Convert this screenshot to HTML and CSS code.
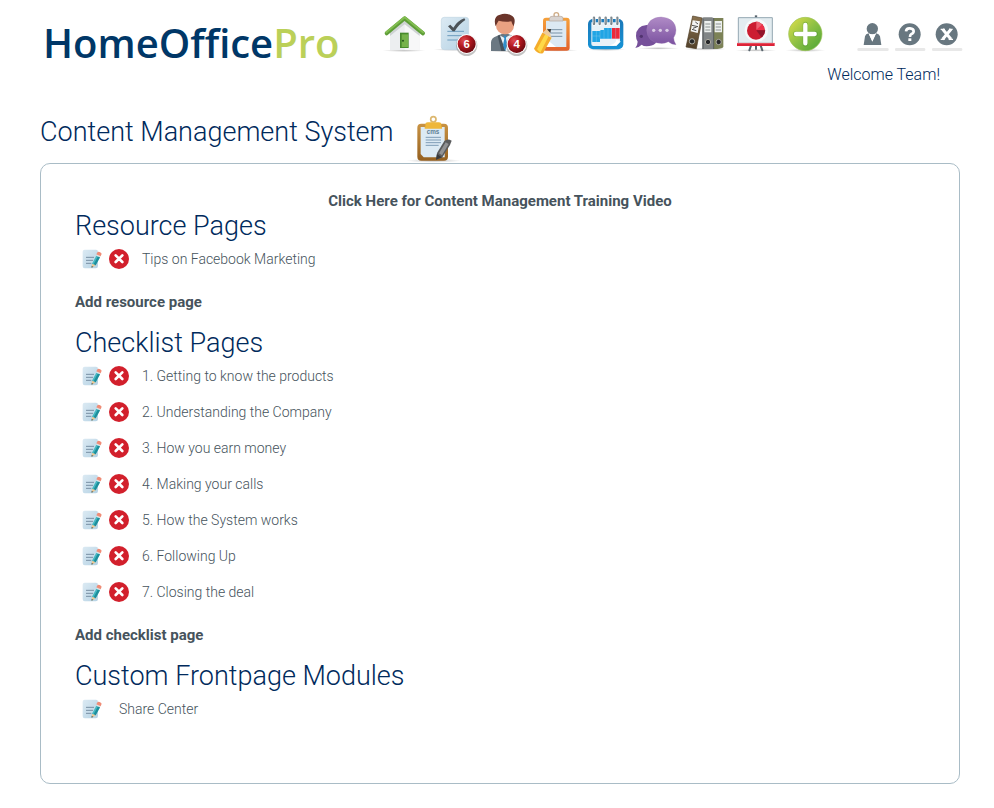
FILE: index.html
```
<!DOCTYPE html>
<html lang="en">
<head>
    <meta charset="utf-8">
    <title>HomeOfficePro - Content Management System</title>
    <link rel="stylesheet" href="styles.css">
</head>
<body>
    <!-- shared shapes for the page rows -->
    <svg class="defs" width="0" height="0" aria-hidden="true">
        <defs>
            <linearGradient id="paper" x2="1" y2="1"><stop stop-color="#dceaf3"/><stop offset="1" stop-color="#b5d2e4"/></linearGradient>
            <linearGradient id="orange" x2="0" y2="1"><stop stop-color="#f6a13a"/><stop offset="1" stop-color="#e2622c"/></linearGradient>
            <linearGradient id="blue" x2="0" y2="1"><stop stop-color="#1b78b8"/><stop offset="1" stop-color="#1593d6"/></linearGradient>
            <linearGradient id="purple" x2="0" y2="1"><stop stop-color="#b08bc6"/><stop offset="1" stop-color="#7b52a0"/></linearGradient>
            <linearGradient id="plus" x2="1" y2="1"><stop stop-color="#e3e04a"/><stop offset=".5" stop-color="#8cc044"/><stop offset="1" stop-color="#4aa336"/></linearGradient>
            <linearGradient id="brown" x2="0" y2="1"><stop stop-color="#8b7350"/><stop offset="1" stop-color="#51402a"/></linearGradient>
            <linearGradient id="gold" x2="0" y2="1"><stop stop-color="#c99343"/><stop offset="1" stop-color="#956020"/></linearGradient>
            <radialGradient id="badge" cx=".35" cy=".3" r=".8"><stop stop-color="#e04a50"/><stop offset=".45" stop-color="#b01820"/><stop offset="1" stop-color="#5e060c"/></radialGradient>
            <radialGradient id="shade"><stop stop-color="#999" stop-opacity=".6"/><stop offset="1" stop-color="#999" stop-opacity="0"/></radialGradient>
            <symbol id="edit" viewBox="0 0 60 60">
                <path d="M8 2H42Q48 2 48 8V51Q48 58 41 58H8Q2 58 2 51V8Q2 2 8 2Z" fill="url(#paper)"/>
                <path d="M12 25H36M12 34H33M12 43H28" stroke="#7890a4" stroke-width="3"/>
                <path d="M29 56L30 44L43 20L54 25L41 49Z" fill="#45b9c2"/>
                <path d="M35 46L48 22L54 25L41 49Z" fill="#1d8e9b"/>
                <path d="M29 56L30 44L41 49Z" fill="#f0c896"/>
                <path d="M29 56L29 51L33 53Z" fill="#333"/>
                <path d="M43 20L45 16L56 21L54 25Z" fill="#dce3e6"/>
                <path d="M43 16L47 9Q54 7 59 14L56 22Z" fill="#ef8c77"/>
            </symbol>
            <symbol id="delete" viewBox="0 0 60 60">
                <circle cx="30" cy="30" r="30" fill="#d2202c"/>
                <path d="M20 19L40 39M40 19L20 39" stroke="#fff" stroke-width="8" stroke-linecap="round"/>
            </symbol>
        </defs>
    </svg>

    <header class="header">
        <a class="logo" href="#">HomeOffice<span class="logo-pro">Pro</span></a>

        <div class="header-right">
            <nav class="toolbar">
                <a href="#" aria-label="Home">
                    <svg class="tool-icon" viewBox="0 0 150 180">
                        <ellipse cx="72" cy="137" rx="65" ry="4" fill="url(#shade)"/>
                        <path d="M30 82L74 46L119 82V135H30Z" fill="#eceef0"/>
                        <path d="M74 46L119 82V135H74Z" fill="#f7f7f8"/>
                        <path d="M30 80L74 46L119 80V93L74 58L30 93Z" fill="#cfd3d4"/>
                        <path d="M20 85L74 40L129 85" fill="none" stroke="#5e9d38" stroke-width="12" stroke-linecap="round" stroke-linejoin="round"/>
                        <path d="M19 82L74 37L129 82" fill="none" stroke="#82bd51" stroke-width="6" stroke-linecap="round" stroke-linejoin="round"/>
                        <path d="M60 83H86V129H60Z" fill="#478a2c"/>
                        <path d="M65 88H84V126H65Z" fill="#75b24a"/>
                        <circle cx="69" cy="107" r="3" fill="#24541c"/>
                    </svg>
                </a>
                <a href="#" aria-label="Tasks, 6 new">
                    <svg class="tool-icon" viewBox="150 0 150 180">
                        <ellipse cx="220" cy="134" rx="60" ry="4" fill="url(#shade)"/>
                        <rect x="184" y="37" width="82" height="97" rx="9" fill="url(#paper)" stroke="#bfd5e2" stroke-width="2"/>
                        <path d="M202 79H252M202 92H248M202 105H235" stroke="#6d9cbd" stroke-width="3"/>
                        <path d="M204 64L211 59L220 68Q232 48 253 40L256 45Q236 58 224 79H218Z" fill="#4c5358"/>
                        <circle cx="260" cy="121" r="32" fill="#888" opacity=".5"/>
                        <circle cx="260" cy="117" r="30" fill="#fff"/>
                        <circle cx="260" cy="117" r="27" fill="url(#badge)"/>
                        <text class="badge-text" x="260" y="128">6</text>
                    </svg>
                </a>
                <a href="#" aria-label="Contacts, 4 new">
                    <svg class="tool-icon" viewBox="300 0 150 180">
                        <ellipse cx="375" cy="138" rx="52" ry="4" fill="url(#shade)"/>
                        <path d="M333 138V112Q334 99 349 94L365 87H385L411 98V138Z" fill="#6b7882"/>
                        <path d="M357 90L374 99L392 89V138H374Z" fill="#e9f2f8"/>
                        <path d="M353 92L359 89L377 138H364Z" fill="#47535d"/>
                        <path d="M371 92L379 92L378 101L382 121L375 138L369 120L373 101Z" fill="#2f8dc9"/>
                        <ellipse cx="375" cy="62" rx="27" ry="26" fill="#e9a182"/>
                        <path d="M347 64Q338 34 360 29Q376 22 393 31Q410 38 401 64Q397 59 394 49Q374 52 356 47Q351 54 347 64Z" fill="#6b352b"/>
                        <circle cx="410" cy="121" r="32" fill="#888" opacity=".5"/>
                        <circle cx="410" cy="117" r="30" fill="#fff"/>
                        <circle cx="410" cy="117" r="27" fill="url(#badge)"/>
                        <text class="badge-text" x="410" y="128">4</text>
                    </svg>
                </a>
                <a href="#" aria-label="Notes">
                    <svg class="tool-icon" viewBox="0 0 150 180">
                        <ellipse cx="82" cy="136" rx="62" ry="4" fill="url(#shade)"/>
                        <rect x="39" y="38" width="80" height="99" rx="9" fill="url(#orange)"/>
                        <path d="M48 47H109V126H66L48 114Z" fill="#dce9f3"/>
                        <path d="M55 107L78 126H48V110Z" fill="#fff"/>
                        <circle cx="79" cy="30" r="7" fill="none" stroke="#cfac86" stroke-width="4"/>
                        <path d="M60 38Q60 34 66 34H92Q99 34 99 40V48H58V41Z" fill="#d8d3d0" stroke="#b3a598" stroke-width="2"/>
                        <path d="M61 74H97M61 84H97M61 94H97" stroke="#7891a5" stroke-width="3"/>
                        <path d="M12 131L37 83L65 98L39 145Q22 148 12 131Z" fill="#f5ad2b"/>
                        <path d="M21 133L46 87L56 93L31 143Z" fill="#ffd948"/>
                        <path d="M37 83L54 69L65 98Z" fill="#eecb9b"/>
                        <path d="M51 73L63 72L61 84Z" fill="#36302b"/>
                    </svg>
                </a>
                <a href="#" aria-label="Calendar">
                    <svg class="tool-icon" viewBox="150 0 150 180">
                        <ellipse cx="228" cy="134" rx="60" ry="4" fill="url(#shade)"/>
                        <rect x="174" y="42" width="106" height="91" rx="15" fill="url(#blue)"/>
                        <path d="M184 52H270V108L252 123H190Q184 123 184 117Z" fill="#e7f1f8"/>
                        <path d="M238 121Q256 119 260 103Q267 110 273 109L259 123Z" fill="#fff"/>
                        <path d="M187 78H211V75H222V69H245V101H210V111H187Z" fill="#20a5e5"/>
                        <path d="M246 69H269V101H246Z" fill="#ed2939"/>
                        <path d="M199 78V111M210 76V101M222 70V101M234 69V101M257 69V101M187 93H210" stroke="#9fd6ef" stroke-width="1"/>
                        <path d="M192 38V58M209 38V58M227 38V58M244 38V58M262 38V58" stroke="#fff" stroke-width="10" stroke-linecap="round"/>
                        <path d="M192 38V57M209 38V57M227 38V57M244 38V57M262 38V57" stroke="#78848b" stroke-width="7" stroke-linecap="round"/>
                        <path d="M190 38V55M207 38V55M225 38V55M242 38V55M260 38V55" stroke="#c1c9cd" stroke-width="2"/>
                    </svg>
                </a>
                <a href="#" aria-label="Messages">
                    <svg class="tool-icon" viewBox="300 0 150 180">
                        <ellipse cx="385" cy="130" rx="62" ry="4" fill="url(#shade)"/>
                        <path d="M318 93Q318 63 350 60Q385 62 385 93Q384 123 350 124Q340 124 335 119Q327 127 316 129Q323 119 323 110Q318 103 318 93Z" fill="#76509a"/>
                        <circle cx="334" cy="94" r="5" fill="#51336f"/>
                        <path d="M350 75Q352 38 393 36Q436 39 438 75Q438 88 431 98Q431 109 438 119Q425 119 415 110Q405 116 391 115Q352 112 350 75Z" fill="url(#purple)" stroke="#9b79b4"/>
                        <circle cx="371" cy="76" r="5" fill="#dacbe4"/>
                        <circle cx="391" cy="76" r="5" fill="#dacbe4"/>
                        <circle cx="411" cy="76" r="5" fill="#dacbe4"/>
                    </svg>
                </a>
                <a href="#" aria-label="Library">
                    <svg class="tool-icon" viewBox="0 0 150 180">
                        <ellipse cx="75" cy="132" rx="65" ry="5" fill="url(#shade)"/>
                        <path d="M38 33L67 39L49 131L18 126Z" fill="url(#brown)" stroke="#4d3c26" stroke-width="2"/>
                        <path d="M38 46L60 49L53 84L32 79Z" fill="#f4f4f4"/>
                        <path d="M36 61L54 65M39 70L50 66M36 73L49 77M46 51L54 57" stroke="#515151" stroke-width="3"/>
                        <path d="M67 40Q67 37 72 37H95Q101 37 101 42V132H67Z" fill="#818586"/>
                        <path d="M101 39H130V126Q126 132 101 132Z" fill="#7c8257"/>
                        <path d="M101 39V132M69 41V132" stroke="#55595a" stroke-width="3"/>
                        <path d="M73 48H94V82H73Z M104 48H126V82H104Z" fill="#edf0ee"/>
                        <path d="M76 57H91M76 66H91M76 75H91M107 57H123M107 66H123M107 75H123" stroke="#8c9392" stroke-width="3"/>
                        <g fill="#27282a" stroke="#aaa89f" stroke-width="3"><circle cx="36" cy="109" r="8"/><circle cx="84" cy="111" r="8"/><circle cx="116" cy="111" r="8"/></g>
                    </svg>
                </a>
                <a href="#" aria-label="Presentation">
                    <svg class="tool-icon" viewBox="150 0 150 180">
                        <ellipse cx="228" cy="136" rx="62" ry="4" fill="url(#shade)"/>
                        <path d="M217 110L208 136M238 110L247 136M228 110V132" stroke="#59656e" stroke-width="6" stroke-linecap="round"/>
                        <path d="M228 31V42" stroke="#59656e" stroke-width="7"/>
                        <path d="M175 38H277V115H175Z" fill="#e3ecf0" stroke="#95a8b2" stroke-width="3"/>
                        <circle cx="229" cy="76" r="35" fill="#fff" opacity=".65"/>
                        <circle cx="228" cy="77" r="27" fill="#cc1d31"/>
                        <path d="M229 74V49Q247 52 253 74Z" fill="#ed6070"/>
                        <path d="M229 74L247 58L254 75Z" fill="#ee3049"/>
                        <path d="M229 76H256Q254 90 244 97Z" fill="#91152b"/>
                        <path d="M171 114H284V123H171Z" fill="#dc2338"/>
                        <path d="M171 115H284" stroke="#f36c77" stroke-width="2"/>
                    </svg>
                </a>
                <a href="#" aria-label="Add">
                    <svg class="tool-icon" viewBox="300 0 150 180">
                        <ellipse cx="376" cy="136" rx="60" ry="5" fill="url(#shade)"/>
                        <circle cx="376" cy="87" r="50" fill="url(#plus)" stroke="#9bc354" stroke-width="2"/>
                        <path d="M376 58V117M347 87H406" stroke="#448c30" stroke-opacity=".35" stroke-width="16" stroke-linecap="round"/>
                        <path d="M376 60V115M348 87H404" stroke="#fff" stroke-width="13" stroke-linecap="round"/>
                    </svg>
                </a>
            </nav>

            <nav class="account-links">
                <a href="#" aria-label="Profile">
                    <svg class="account-icon" viewBox="102 0 111 180">
                        <rect x="112" y="129" width="94" height="9" rx="4" fill="#e8e8e8"/>
                        <circle cx="157" cy="71" r="17" fill="#687780"/>
                        <path d="M131 120L135 94Q137 86 146 85L157 110L168 85Q177 86 180 94L184 120Z" fill="#687780"/>
                        <path d="M146 86L157 109L168 86Q157 92 146 86Z" fill="#fff"/>
                    </svg>
                </a>
                <a href="#" aria-label="Help">
                    <svg class="account-icon" viewBox="213 0 111 180">
                        <rect x="225" y="129" width="91" height="9" rx="4" fill="#e8e8e8"/>
                        <circle cx="269" cy="88" r="33" fill="#687780"/>
                        <path d="M258 79Q259 69 270 70Q281 71 281 79Q281 85 273 88Q270 90 270 96" fill="none" stroke="#fff" stroke-width="8"/>
                        <rect x="265" y="100" width="9" height="8" fill="#fff"/>
                    </svg>
                </a>
                <a href="#" aria-label="Log out">
                    <svg class="account-icon" viewBox="324 0 111 180">
                        <rect x="336" y="129" width="91" height="9" rx="4" fill="#e8e8e8"/>
                        <circle cx="380" cy="88" r="33" fill="#687780"/>
                        <path d="M368 73L393 103M393 73L368 103" stroke="#fff" stroke-width="9"/>
                        <path d="M362 73H375M387 73H398M362 103H374M386 103H399" stroke="#fff" stroke-width="4"/>
                    </svg>
                </a>
            </nav>
            <p class="welcome">Welcome Team!</p>
        </div>
    </header>

    <main>
        <div class="title-row">
            <h1>Content Management System</h1>
            <svg class="title-icon" viewBox="0 0 240 174" aria-hidden="true">
                <ellipse cx="95" cy="167" rx="82" ry="6" fill="url(#shade)"/>
                <rect x="46" y="56" width="92" height="111" rx="12" fill="url(#gold)"/>
                <path d="M56 66H128V157H65L56 147Z" fill="#dceaf4"/>
                <circle cx="94" cy="43" r="8" fill="none" stroke="#dcb76f" stroke-width="5"/>
                <path d="M70 58Q70 52 77 52H111Q118 52 118 58V65H120V71H68V65H70Z" fill="#eeb73b"/>
                <text class="clip-text" x="93" y="88">cms</text>
                <path d="M71 97H117M71 105H117M71 113H117M71 121H110" stroke="#7e9cb6" stroke-width="3"/>
                <path d="M102 164L105 144L127 108Q137 99 149 107L144 120L120 158Z" fill="#5a5b5d"/>
                <path d="M111 145L131 112L140 117L120 151Z" fill="#919294"/>
                <path d="M102 164L105 147L119 157Z" fill="#39393a"/>
            </svg>
        </div>

        <div class="panel">
            <p class="training"><a href="#">Click Here for Content Management Training Video</a></p>

            <section>
                <h2>Resource Pages</h2>
                <ul class="page-list">
                    <li>
                        <a href="#" aria-label="Edit"><svg class="row-icon"><use href="#edit"/></svg></a>
                        <a href="#" aria-label="Delete"><svg class="row-icon"><use href="#delete"/></svg></a>
                        <span class="page-name">Tips on Facebook Marketing</span>
                    </li>
                </ul>
                <a class="add-link" href="#">Add resource page</a>
            </section>

            <section>
                <h2>Checklist Pages</h2>
                <ul class="page-list">
                    <li>
                        <a href="#" aria-label="Edit"><svg class="row-icon"><use href="#edit"/></svg></a>
                        <a href="#" aria-label="Delete"><svg class="row-icon"><use href="#delete"/></svg></a>
                        <span class="page-name">1. Getting to know the products</span>
                    </li>
                    <li>
                        <a href="#" aria-label="Edit"><svg class="row-icon"><use href="#edit"/></svg></a>
                        <a href="#" aria-label="Delete"><svg class="row-icon"><use href="#delete"/></svg></a>
                        <span class="page-name">2. Understanding the Company</span>
                    </li>
                    <li>
                        <a href="#" aria-label="Edit"><svg class="row-icon"><use href="#edit"/></svg></a>
                        <a href="#" aria-label="Delete"><svg class="row-icon"><use href="#delete"/></svg></a>
                        <span class="page-name">3. How you earn money</span>
                    </li>
                    <li>
                        <a href="#" aria-label="Edit"><svg class="row-icon"><use href="#edit"/></svg></a>
                        <a href="#" aria-label="Delete"><svg class="row-icon"><use href="#delete"/></svg></a>
                        <span class="page-name">4. Making your calls</span>
                    </li>
                    <li>
                        <a href="#" aria-label="Edit"><svg class="row-icon"><use href="#edit"/></svg></a>
                        <a href="#" aria-label="Delete"><svg class="row-icon"><use href="#delete"/></svg></a>
                        <span class="page-name">5. How the System works</span>
                    </li>
                    <li>
                        <a href="#" aria-label="Edit"><svg class="row-icon"><use href="#edit"/></svg></a>
                        <a href="#" aria-label="Delete"><svg class="row-icon"><use href="#delete"/></svg></a>
                        <span class="page-name">6. Following Up</span>
                    </li>
                    <li>
                        <a href="#" aria-label="Edit"><svg class="row-icon"><use href="#edit"/></svg></a>
                        <a href="#" aria-label="Delete"><svg class="row-icon"><use href="#delete"/></svg></a>
                        <span class="page-name">7. Closing the deal</span>
                    </li>
                </ul>
                <a class="add-link" href="#">Add checklist page</a>
            </section>

            <section>
                <h2>Custom Frontpage Modules</h2>
                <ul class="page-list">
                    <li>
                        <a href="#" aria-label="Edit"><svg class="row-icon"><use href="#edit"/></svg></a>
                        <span class="module-name">Share Center</span>
                    </li>
                </ul>
            </section>
        </div>
    </main>
</body>
</html>
```
FILE: styles.css
```
* {
    box-sizing: border-box;
}

body {
    margin: 0;
    padding: 0 34px 24px 40px;
    background-color: #fff;
    color: #46535c;
    font-family: Roboto, "Liberation Sans", sans-serif;
    font-size: 14px;
    font-weight: 300;
}

a {
    color: inherit;
    text-decoration: none;
}

svg {
    display: block;
}

.defs {
    position: absolute;
}

h1, h2, p {
    margin: 0;
}

h1, h2 {
    color: #002a5c;
    font-size: 27px;
    font-weight: 300;
    line-height: 30px;
}

/* header */
.header {
    display: flex;
    justify-content: space-between;
    height: 105px;
    margin-right: -5px;
    padding-left: 3px;
}

.logo {
    padding-top: 18px;
    color: #003767;
    font-family: "Open Sans", sans-serif;
    font-size: 40px;
    font-weight: 600;
    line-height: 50px;
}

.logo-pro {
    color: #bbd058;
}

.header-right {
    display: flex;
    flex-wrap: wrap;
    justify-content: flex-end;
    align-content: flex-start;
    column-gap: 24px;
    padding-top: 5px;
}

.toolbar, .account-links {
    display: flex;
}

.tool-icon {
    width: 50px;
    height: 60px;
}

.account-icon {
    width: 37px;
    height: 60px;
}

.badge-text {
    fill: #fff;
    font: bold 34px "Liberation Sans", sans-serif;
    text-anchor: middle;
}

.welcome {
    width: 100%;
    padding-right: 25px;
    color: #002a5c;
    font-size: 16px;
    line-height: 20px;
    text-align: right;
}

/* page title */
.title-row {
    display: flex;
    gap: 8px;
}

.title-row h1 {
    padding-top: 12px;
}

.title-icon {
    width: 80px;
    height: 58px;
}

.clip-text {
    fill: #5d7f94;
    font: bold 19px "Liberation Sans", sans-serif;
    text-anchor: middle;
}

/* content box */
.panel {
    padding: 27px 34px 56px;
    border: 1px solid #a9bcc6;
    border-radius: 10px;
}

.training {
    text-align: center;
}

.training, .add-link {
    font-size: 15px;
    font-weight: 700;
    line-height: 20px;
}

.add-link {
    display: block;
    margin: 15px 0 16px;
}

.page-list {
    margin: 0;
    padding: 0 0 0 7px;
    list-style: none;
}

.page-list li {
    display: flex;
    align-items: center;
    gap: 7px;
    height: 36px;
}

.row-icon {
    width: 20px;
    height: 20px;
}

.page-name {
    padding-left: 6px;
}

.module-name {
    padding-left: 10px;
}
```
